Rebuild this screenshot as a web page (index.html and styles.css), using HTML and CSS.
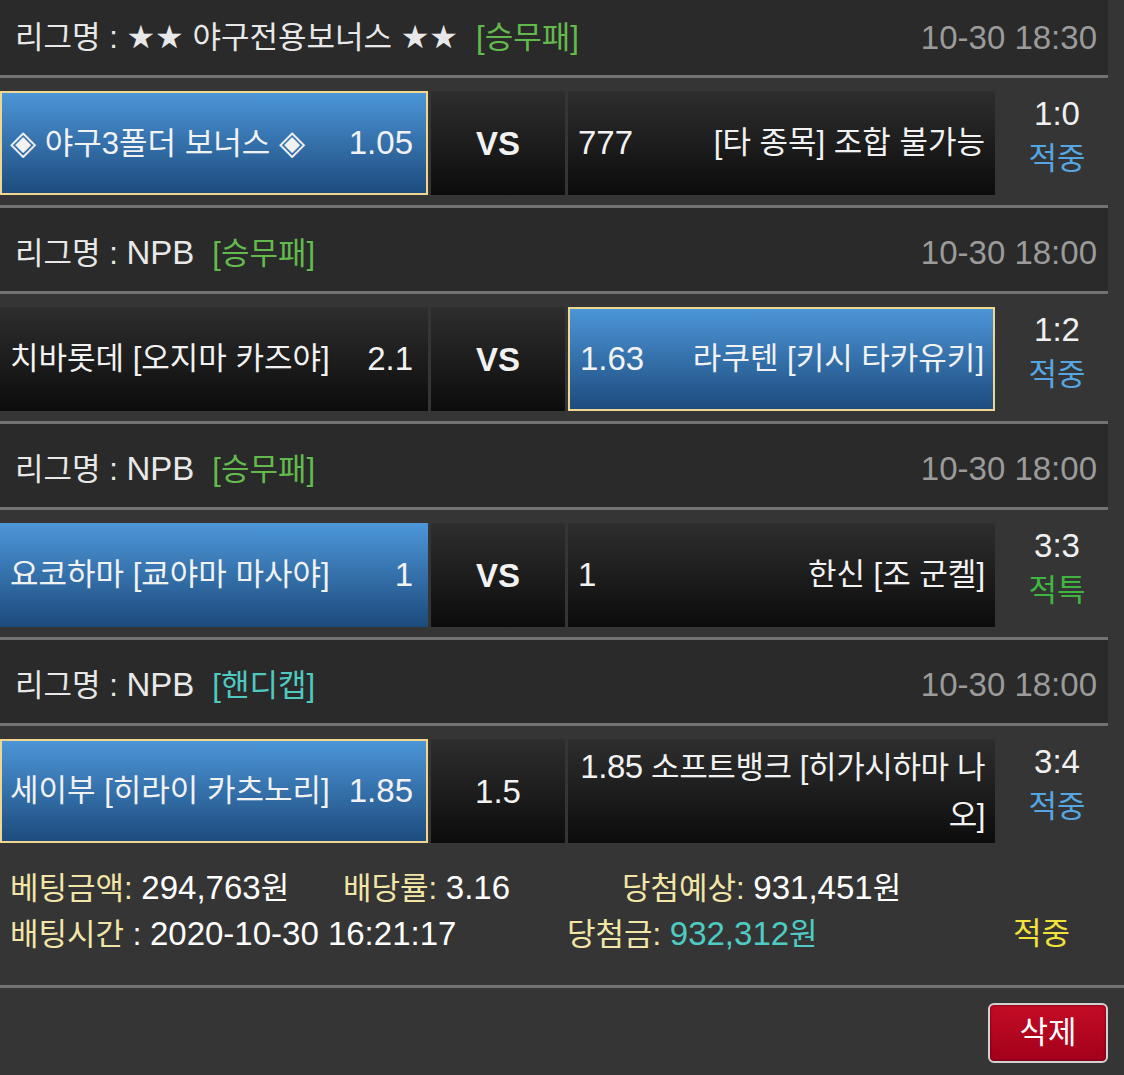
FILE: index.html
```html
<!DOCTYPE html>
<html lang="ko">
<head>
<meta charset="utf-8">
<title>베팅내역</title>
<link rel="stylesheet" href="styles.css">
</head>
<body>
<div class="board">
  <div class="list">
    <div class="league first">
      <div class="lname">리그명 : <span class="star">★★</span> 야구전용보너스 <span class="star">★★</span><span class="tag green">[승무패]</span></div>
      <div class="date num">10-30 18:30</div>
    </div>
    <div class="match">
      <div class="cell home blue sel"><span class="name"><span class="dia">◈</span> 야구3폴더 보너스 <span class="dia">◈</span></span><span class="num">1.05</span></div>
      <div class="cell vs"><b class="num">VS</b></div>
      <div class="cell away"><span class="num">777</span><span class="name">[타 종목] 조합 불가능</span></div>
      <div class="result"><div class="num">1:0</div><div class="hit">적중</div></div>
    </div>

    <div class="league">
      <div class="lname">리그명 : <span class="num">NPB</span><span class="tag green">[승무패]</span></div>
      <div class="date num">10-30 18:00</div>
    </div>
    <div class="match">
      <div class="cell home"><span class="name">치바롯데 [오지마 카즈야]</span><span class="num">2.1</span></div>
      <div class="cell vs"><b class="num">VS</b></div>
      <div class="cell away blue sel"><span class="num">1.63</span><span class="name">라쿠텐 [키시 타카유키]</span></div>
      <div class="result"><div class="num">1:2</div><div class="hit">적중</div></div>
    </div>

    <div class="league">
      <div class="lname">리그명 : <span class="num">NPB</span><span class="tag green">[승무패]</span></div>
      <div class="date num">10-30 18:00</div>
    </div>
    <div class="match">
      <div class="cell home blue"><span class="name">요코하마 [쿄야마 마사야]</span><span class="num">1</span></div>
      <div class="cell vs"><b class="num">VS</b></div>
      <div class="cell away"><span class="num">1</span><span class="name">한신 [조 군켈]</span></div>
      <div class="result"><div class="num">3:3</div><div class="void">적특</div></div>
    </div>

    <div class="league">
      <div class="lname">리그명 : <span class="num">NPB</span><span class="tag cyan">[핸디캡]</span></div>
      <div class="date num">10-30 18:00</div>
    </div>
    <div class="match last">
      <div class="cell home blue sel"><span class="name">세이부 [히라이 카츠노리]</span><span class="num">1.85</span></div>
      <div class="cell vs"><span class="num">1.5</span></div>
      <div class="cell away"><div class="wrapname"><span class="num">1.85</span> 소프트뱅크 [히가시하마 나오]</div></div>
      <div class="result"><div class="num">3:4</div><div class="hit">적중</div></div>
    </div>
  </div>

  <div class="summary">
    <div class="srow srow1">
      <div><span class="lbl">베팅금액:</span> <span class="num">294,763</span>원</div>
      <div><span class="lbl">배당률:</span> <span class="num">3.16</span></div>
      <div><span class="lbl">당첨예상:</span> <span class="num">931,451</span>원</div>
    </div>
    <div class="srow srow2">
      <div><span class="lbl">배팅시간</span> : <span class="num">2020-10-30 16:21:17</span></div>
      <div><span class="lbl">당첨금:</span> <span class="win"><span class="num">932,312</span>원</span></div>
      <div class="final">적중</div>
    </div>
  </div>

  <div class="actions">
    <button class="del" type="button">삭제</button>
  </div>
</div>
</body>
</html>
```

FILE: styles.css
```css
html, body {
  margin: 0;
  padding: 0;
}

body {
  background: #353535;
  color: #f0f0f0;
  font-family: "Liberation Sans", "Noto Sans CJK KR", sans-serif;
  font-size: 31px;
  width: 1124px;
  height: 1075px;
  overflow: hidden;
}

.num {
  font-size: 33px;
}

.star {
  font-family: "DejaVu Sans", sans-serif;
  font-size: 32px;
}

.dia {
  font-family: "DejaVu Sans", sans-serif;
  font-size: 34px;
}

.board {
  width: 1124px;
}

.list {
  width: 1108px;
}

.league {
  height: 86px;
  box-sizing: border-box;
  padding: 7px 11px 0 15px;
  background: #2a2a2a;
  border-bottom: 3px solid #727272;
  display: flex;
  align-items: center;
  justify-content: space-between;
  color: #e8e8e8;
  line-height: 40px;
}

.league.first {
  height: 78px;
  padding-top: 0;
}

.league .date {
  color: #9b9b9b;
}

.tag {
  margin-left: 18px;
}

.green {
  color: #63ba4c;
}

.cyan {
  color: #4fc9c0;
}

.match {
  height: 130px;
  box-sizing: border-box;
  padding: 13px 0 10px 0;
  border-bottom: 3px solid #727272;
  display: flex;
  align-items: flex-start;
}

.match.last {
  height: 127px;
  border-bottom: none;
}

.cell {
  height: 104px;
  box-sizing: border-box;
  border: 2px solid transparent;
  background: linear-gradient(to bottom, #2e2e2e, #0c0c0c);
  background-origin: border-box;
  display: flex;
  align-items: center;
  justify-content: space-between;
  color: #f2f2f2;
  line-height: 40px;
  white-space: nowrap;
}

.cell.blue {
  background: linear-gradient(to bottom, #4d97d9, #1c4a7c);
  background-origin: border-box;
}

.cell.sel {
  border-color: #f0d78f;
}

.home {
  width: 428px;
  padding: 0 13px 0 8px;
}

.vs {
  width: 134px;
  margin-left: 3px;
  justify-content: center;
  padding-top: 2px;
}

.vs b {
  font-weight: bold;
}

.away {
  width: 427px;
  margin-left: 3px;
  padding: 0 8px 0 8px;
}

.away.sel {
  padding-left: 10px;
  padding-right: 9px;
}

.wrapname {
  width: 100%;
  white-space: normal;
  text-align: right;
  line-height: 48px;
  letter-spacing: -0.4px;
}

.result {
  flex: 1;
  padding-left: 11px;
  text-align: center;
  line-height: 45px;
  color: #f0f0f0;
}

.hit {
  color: #55a6e2;
}

.void {
  color: #3fb73f;
}

.summary {
  box-sizing: border-box;
  height: 135px;
  padding: 12px 0 0 10px;
  border-bottom: 3px solid #727272;
  line-height: 45px;
  color: #ffffff;
}

.srow {
  display: grid;
  white-space: nowrap;
}

.srow1 {
  grid-template-columns: 333px 279px auto;
}

.srow2 {
  grid-template-columns: 557px 446px auto;
}

.lbl {
  color: #f1e6a6;
}

.win {
  color: #4ecbc3;
}

.final {
  color: #f3e23c;
}

.actions {
  display: flex;
  justify-content: flex-end;
  padding: 15px 16px 0 0;
}

.del {
  width: 120px;
  height: 60px;
  box-sizing: border-box;
  border: 2px solid #d2d2d2;
  border-radius: 6px;
  background: linear-gradient(to bottom, #c40c25, #a3001b);
  box-shadow: inset 0 0 3px rgba(0, 0, 0, 0.5);
  color: #ffffff;
  font-family: "Liberation Sans", "Noto Sans CJK KR", sans-serif;
  font-size: 31px;
  line-height: 40px;
  padding: 0;
  cursor: pointer;
}
```
